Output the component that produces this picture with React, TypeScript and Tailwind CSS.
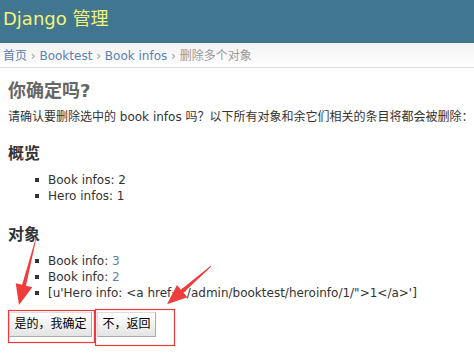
import React from "react";

const font = "font-['DejaVu_Sans','Noto_Sans_CJK_SC',sans-serif]";

function Bullet({ children }: { children: React.ReactNode }) {
  return (
    <li className="flex items-center py-[1px] text-[12px] leading-[14px] text-[#333] whitespace-nowrap">
      <span className="w-[4px] h-[4px] bg-[#333] mr-[9px] shrink-0" />
      <span>{children}</span>
    </li>
  );
}

export default function App() {
  return (
    <div className={`relative w-[474px] h-[364px] bg-white overflow-hidden ${font}`}>
      <div className="h-[43px] bg-[#417690] pl-[3px] pt-[8px]">
        <h1 className="text-[18px] leading-[21px] font-normal text-[#f4f379]">Django 管理</h1>
      </div>
      <div className="h-[25px] border-b border-[#dcdcdc] bg-gradient-to-b from-[#f2f2f2] to-white pt-[6px] pl-[3px] text-[12px] leading-[14px] text-[#999] whitespace-nowrap">
        <span className="text-[#5b80b2]">首页</span> › <span className="text-[#5b80b2]">Booktest</span> ›{" "}
        <span className="text-[#5b80b2]">Book infos</span> › 删除多个对象
      </div>
      <div className="pl-[8px]">
        <h1 className="mt-[12px] text-[18px] leading-[21px] font-bold text-[#666]">你确定吗?</h1>
        <p className="mt-[9px] text-[12px] leading-[14px] text-[#333] whitespace-nowrap">
          请确认要删除选中的 book infos 吗？以下所有对象和余它们相关的条目将都会被删除：
        </p>
        <h2 className="mt-[20px] text-[16px] leading-[19px] font-bold text-[#333]">概览</h2>
        <ul className="mt-[9px] pl-[27px]">
          <Bullet>Book infos: 2</Bullet>
          <Bullet>Hero infos: 1</Bullet>
        </ul>
        <h2 className="mt-[21px] text-[16px] leading-[19px] font-bold text-[#333]">对象</h2>
        <ul className="mt-[9px] pl-[27px]">
          <Bullet>
            Book info: <span className="text-[#5b80b2]">3</span>
          </Bullet>
          <Bullet>
            Book info: <span className="text-[#5b80b2]">2</span>
          </Bullet>
          <Bullet>[u'Hero info: &lt;a href="/admin/booktest/heroinfo/1/"&gt;1&lt;/a&gt;']</Bullet>
        </ul>
        <div className="mt-[11px] pl-[1px] flex gap-[5px]">
          <button className="w-[83px] h-[25px] flex items-center justify-center border border-t-[#ddd] border-l-[#ddd] border-r-[#aaa] border-b-[#aaa] bg-gradient-to-b from-white to-[#e4e4e4] text-[12px] leading-[17px] text-black">
            是的，我确定
          </button>
          <button className="w-[59px] h-[25px] flex items-center justify-center border border-t-[#ddd] border-l-[#ddd] border-r-[#aaa] border-b-[#aaa] bg-gradient-to-b from-white to-[#e4e4e4] text-[12px] leading-[17px] text-black">
            不，返回
          </button>
        </div>
      </div>
      <svg className="absolute left-0 top-0 pointer-events-none" width="474" height="364" viewBox="0 0 474 364">
        <rect x="8.5" y="310.5" width="86" height="32" fill="none" stroke="#ee3a3a" strokeWidth="1.2" />
        <rect x="95.5" y="309.5" width="79" height="36" fill="none" stroke="#ee3a3a" strokeWidth="1.2" />
        <polygon
          points="36.4,238 26,285.7 32.3,287.2 19,305 15.7,283.2 22.1,284.7 35.8,238"
          fill="#f03c3c"
        />
        <polygon
          points="211.3,266.4 183.5,292.7 187.4,297.3 167,304.3 177,285.1 180.9,289.7 210.7,265.7"
          fill="#f03c3c"
        />
      </svg>
    </div>
  );
}
